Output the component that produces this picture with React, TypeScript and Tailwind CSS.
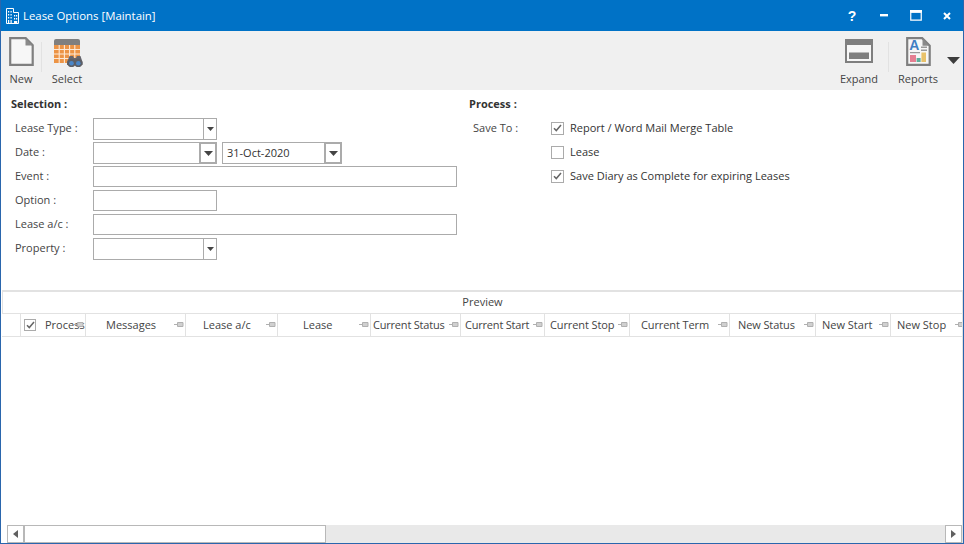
import React from "react";

const Caret = ({ big }: { big?: boolean }) => (
  <svg width={big ? 9 : 7} height={big ? 5 : 4} viewBox="0 0 9 5" className="block">
    <path d="M0 0h9L4.5 5z" fill="#444" />
  </svg>
);

const Input = ({ w, h, children }: { w: string; h: string; children?: React.ReactNode }) => (
  <div className={`${w} ${h} flex border border-[#ababab] bg-white`}>{children}</div>
);

const Combo = ({ h }: { h: string }) => (
  <div className={`w-[124px] ${h} flex border border-[#ababab] bg-white`}>
    <div className="flex-1" />
    <div className="w-[13px] border-l border-[#ababab] flex items-center justify-center">
      <Caret />
    </div>
  </div>
);

const DateBox = ({ w, text }: { w: string; text?: string }) => (
  <div className={`${w} h-[22px] flex border border-[#ababab] bg-white`}>
    <div className="flex-1 pl-[4px] leading-[19px] text-[#333]">{text}</div>
    <div className="w-[18px] -my-px -mr-px border-2 border-[#ababab] flex items-center justify-center">
      <Caret big />
    </div>
  </div>
);

const Row = ({ label, children }: { label: string; children: React.ReactNode }) => (
  <div className="h-6 flex pt-px">
    <div className="w-[82px] pl-[4px] leading-[20px] text-[#444]">{label}</div>
    <div className="flex gap-[5px]">{children}</div>
  </div>
);

const Check = ({ on, size }: { on?: boolean; size: string }) => (
  <div className={`${size} border border-[#ababab] bg-white flex items-center justify-center shrink-0`}>
    {on && (
      <svg width="9" height="8" viewBox="0 0 9 8">
        <path d="M1 4.2 3.3 6.6 8 1" fill="none" stroke="#666" strokeWidth="1.5" />
      </svg>
    )}
  </div>
);

const CheckRow = ({ on, label }: { on?: boolean; label: string }) => (
  <div className="h-6 flex items-center gap-[6px]">
    <Check on={on} size="w-[13px] h-[13px]" />
    <span className="text-[#333]">{label}</span>
  </div>
);

const Pin = () => (
  <svg width="10" height="7" viewBox="0 0 10 7" className="block">
    <path d="M0 3.5h3M3.5 1.5h5.5v4h-5.5z" fill="#d0d0d0" stroke="#b0b0b0" strokeWidth="1" />
  </svg>
);

const cols = [
  { label: "Messages", cls: "w-[100px] pl-[20px]" },
  { label: "Lease a/c", cls: "w-[92px] pl-[17px]" },
  { label: "Lease", cls: "w-[93px] pl-[25px]" },
  { label: "Current Status", cls: "w-[90px] pl-[2px] tracking-[-0.2px]" },
  { label: "Current Start", cls: "w-[84px] pl-[4px] tracking-[-0.2px]" },
  { label: "Current Stop", cls: "w-[85px] pl-[5px] tracking-[-0.1px]" },
  { label: "Current Term", cls: "w-[100px] pl-[11px] tracking-[-0.1px]" },
  { label: "New Status", cls: "w-[86px] pl-[8px] tracking-[-0.1px]" },
  { label: "New Start", cls: "w-[75px] pl-[6px]" },
  { label: "New Stop", cls: "w-[76px] pl-[6px]" },
];

const ToolButton = ({ label, w, children }: { label: string; w: string; children: React.ReactNode }) => (
  <div className={`${w} flex flex-col items-center`}>
    <div className="h-[40px] pt-[6px] flex justify-center">{children}</div>
    <div className="text-[11px] leading-[16px] text-[#444]">{label}</div>
  </div>
);

const Sep = () => <div className="w-px h-[30px] mt-[11px] bg-[#e2e2e2]" />;

export default function App() {
  return (
    <div
      className="w-[964px] h-[544px] flex flex-col overflow-hidden bg-white border-x border-b border-[#2a66ad] text-[11px]"
      style={{ fontFamily: '"Open Sans", "Noto Sans", sans-serif' }}
    >
      {/* title */}
      <div className="h-[31px] shrink-0 bg-[#0072c6] flex items-center text-white -mx-px px-[6px]">
        <svg width="13" height="16" viewBox="0 0 13 16" className="mr-[4px]">
          <path d="M.5 15.5V.5h7v4h5v11z" fill="none" stroke="#fff" />
          <path d="M2 3h1.2v1.4H2zM4.5 3h1.2v1.4H4.5zM2 6h1.2v1.4H2zM4.5 6h1.2v1.4H4.5zM2 9h1.2v1.4H2zM4.5 9h1.2v1.4H4.5zM8 7h1.2v1.4H8zM10 7h1.2v1.4H10zM8 10h1.2v1.4H8zM10 10h1.2v1.4H10zM2 12h1.2v3H2zM4.5 12h1.2v3H4.5zM8 13h3.2v2H8z" fill="#fff" />
        </svg>
        <span className="text-[11.4px]">Lease Options [Maintain]</span>
        <div className="flex-1" />
        <div className="flex items-center">
          <span className="w-[14px] text-center text-[14px] font-bold leading-none" style={{ fontFamily: '"Liberation Sans", sans-serif' }}>?</span>
          <svg width="8" height="3" viewBox="0 0 8 3" className="ml-[21px]"><path d="M0 0h8v2.4H0z" fill="#fff" /></svg>
          <svg width="12" height="11" viewBox="0 0 12 11" className="ml-[22px]"><path d="M.75 2.2h10.5v8H.75z" fill="none" stroke="#fff" strokeWidth="1.2" /><path d="M0 0h12v2.6H0z" fill="#fff" /></svg>
          <svg width="8" height="8" viewBox="0 0 8 8" className="ml-[21px] mr-[7px]"><path d="M1 1l6 6M7 1 1 7" stroke="#fff" strokeWidth="2" /></svg>
        </div>
      </div>

      {/* toolbar */}
      <div className="h-[59px] shrink-0 bg-[#f0f0f0] flex pl-[3px]">
        <ToolButton label="New" w="w-[34px]">
          <svg width="25" height="29" viewBox="0 0 25 29">
            <path d="M1.2 1.2h15.5l7 7v19.6H1.2z" fill="#f7f7f7" stroke="#7f7f7f" strokeWidth="2.2" />
            <path d="M16.5 1.5v7h7z" fill="#8a8a8a" />
          </svg>
        </ToolButton>
        <div className="w-[3px]" />
        <Sep />
        <div className="w-[8px]" />
        <ToolButton label="Select" w="w-[34px]">
          <svg width="32" height="30" viewBox="0 0 32 30">
            <path d="M3 4a2 2 0 0 1 2-2h22a2 2 0 0 1 2 2v4H3z" fill="#7f7f7f" />
            <path d="M3 8h26v18H3z" fill="#ec9446" />
            <path d="M8.2 8v18M13.4 8v18M18.6 8v18M23.8 8v18M3 12.5h26M3 17h26M3 21.5h26" stroke="#fde9d6" strokeWidth="1.1" />
            <path d="M16 25l2.5-6h3.5l1 2h2l1-2h3.5l2 6v3H16z" fill="#66666e" />
            <circle cx="20.5" cy="26" r="4.3" fill="#5d5f66" />
            <circle cx="27.3" cy="26" r="4.3" fill="#5d5f66" />
            <circle cx="20.5" cy="26.2" r="2.3" fill="#4a86c8" />
            <circle cx="27.3" cy="26.2" r="2.3" fill="#4a86c8" />
          </svg>
        </ToolButton>
        <div className="flex-1" />
        <ToolButton label="Expand" w="w-[42px]">
          <svg width="28" height="24" viewBox="0 0 28 24" className="mt-[2px]">
            <path d="M1 1h26v22H1z" fill="#f7f7f7" stroke="#7f7f7f" strokeWidth="2" />
            <path d="M1 1h26v5H1zM4 13.5h20v6.5H4z" fill="#7f7f7f" />
          </svg>
        </ToolButton>
        <div className="w-[8px]" />
        <Sep />
        <div className="w-[8px]" />
        <ToolButton label="Reports" w="w-[42px]">
          <svg width="25" height="29" viewBox="0 0 25 29">
            <path d="M1.2 1.2h15l7.5 7.5v19.1H1.2z" fill="#f7f7f7" stroke="#7f7f7f" strokeWidth="2.2" />
            <path d="M16.5 1.5v7.2h7z" fill="#8a8a8a" />
            <text x="3.2" y="13" fontSize="14" fontWeight="700" fill="#3f7fc4" fontFamily="Liberation Sans, sans-serif">A</text>
            <path d="M15 9.5h6v1.6h-6zM15 12.5h6v1.6h-6zM4 15h10v1.2H4z" fill="#9a9a9a" />
            <path d="M4 18h6v7H4z" fill="#e57f92" />
            <path d="M10.6 21h4v4h-4z" fill="#5fae9b" />
            <path d="M15.4 15.5h4.6V25h-4.6z" fill="#e9c26a" />
          </svg>
        </ToolButton>
        <div className="w-[8px]" />
        <svg width="13" height="7" viewBox="0 0 13 7" className="mt-[26px] mr-[3px]">
          <path d="M0 0h13L6.5 7z" fill="#3c3c3c" />
        </svg>
      </div>

      {/* form */}
      <div className="h-[200px] shrink-0 flex">
        <div className="w-[468px] pl-[10px] pt-[7px]">
          <div className="h-5 font-bold text-[#333] leading-[14px]">Selection :</div>
          <Row label="Lease Type :"><Combo h="h-[22px]" /></Row>
          <Row label="Date :">
            <DateBox w="w-[124px]" />
            <DateBox w="w-[120px]" text="31-Oct-2020" />
          </Row>
          <Row label="Event :"><Input w="w-[364px]" h="h-[21px]" /></Row>
          <Row label="Option :"><Input w="w-[124px]" h="h-[21px]" /></Row>
          <Row label="Lease a/c :"><Input w="w-[364px]" h="h-[21px]" /></Row>
          <Row label="Property :"><Combo h="h-[22px]" /></Row>
        </div>
        <div className="flex-1 pt-[7px]">
          <div className="h-5 font-bold text-[#333] leading-[14px]">Process :</div>
          <div className="flex">
            <div className="w-[82px] pl-[4px] leading-[22px] text-[#444]">Save To :</div>
            <div className="flex flex-col -mt-px">
              <CheckRow on label="Report / Word Mail Merge Table" />
              <CheckRow label="Lease" />
              <CheckRow on label="Save Diary as Complete for expiring Leases" />
            </div>
          </div>
        </div>
      </div>

      {/* preview */}
      <div className="flex-1 min-h-0 flex flex-col ml-px border-t-2 border-r border-[#e2e2e2] overflow-hidden">
        <div className="h-[22px] shrink-0 border-b border-l border-[#e2e2e2] flex items-center justify-center text-[#444]">Preview</div>
        <div className="h-[23px] shrink-0 flex border-b border-[#e2e2e2] overflow-hidden text-[#444] text-[11px]">
          <div className="w-[19px] shrink-0 border-r border-[#e2e2e2]" />
          <div className="w-[65px] shrink-0 relative flex items-center pl-[3px] border-r border-[#e2e2e2]">
            <Check on size="w-[12px] h-[12px]" />
            <span className="ml-[9px] whitespace-nowrap">Process</span>
            <div className="absolute right-[1px] top-[7px]"><Pin /></div>
          </div>
          {cols.map((c) => (
            <div key={c.label} className={`${c.cls} shrink-0 relative flex items-center border-r border-[#e2e2e2] whitespace-nowrap`}>
              {c.label}
              <div className="absolute right-[1px] top-[7px]"><Pin /></div>
            </div>
          ))}
        </div>
        <div className="flex-1" />
        {/* scrollbar */}
        <div className="h-[18px] shrink-0 flex bg-[#e9e9e9]">
          <div className="w-[5px] bg-white" />
          <div className="w-[17px] bg-white border border-[#b8b8b8] flex items-center justify-center">
            <svg width="5" height="8" viewBox="0 0 5 8"><path d="M5 0v8L0 4z" fill="#606060" /></svg>
          </div>
          <div className="w-[302px] bg-white border border-[#b8b8b8]" />
          <div className="flex-1" />
          <div className="w-[17px] bg-white border border-[#b8b8b8] flex items-center justify-center">
            <svg width="5" height="8" viewBox="0 0 5 8"><path d="M0 0v8l5-4z" fill="#606060" /></svg>
          </div>
        </div>
      </div>
    </div>
  );
}
